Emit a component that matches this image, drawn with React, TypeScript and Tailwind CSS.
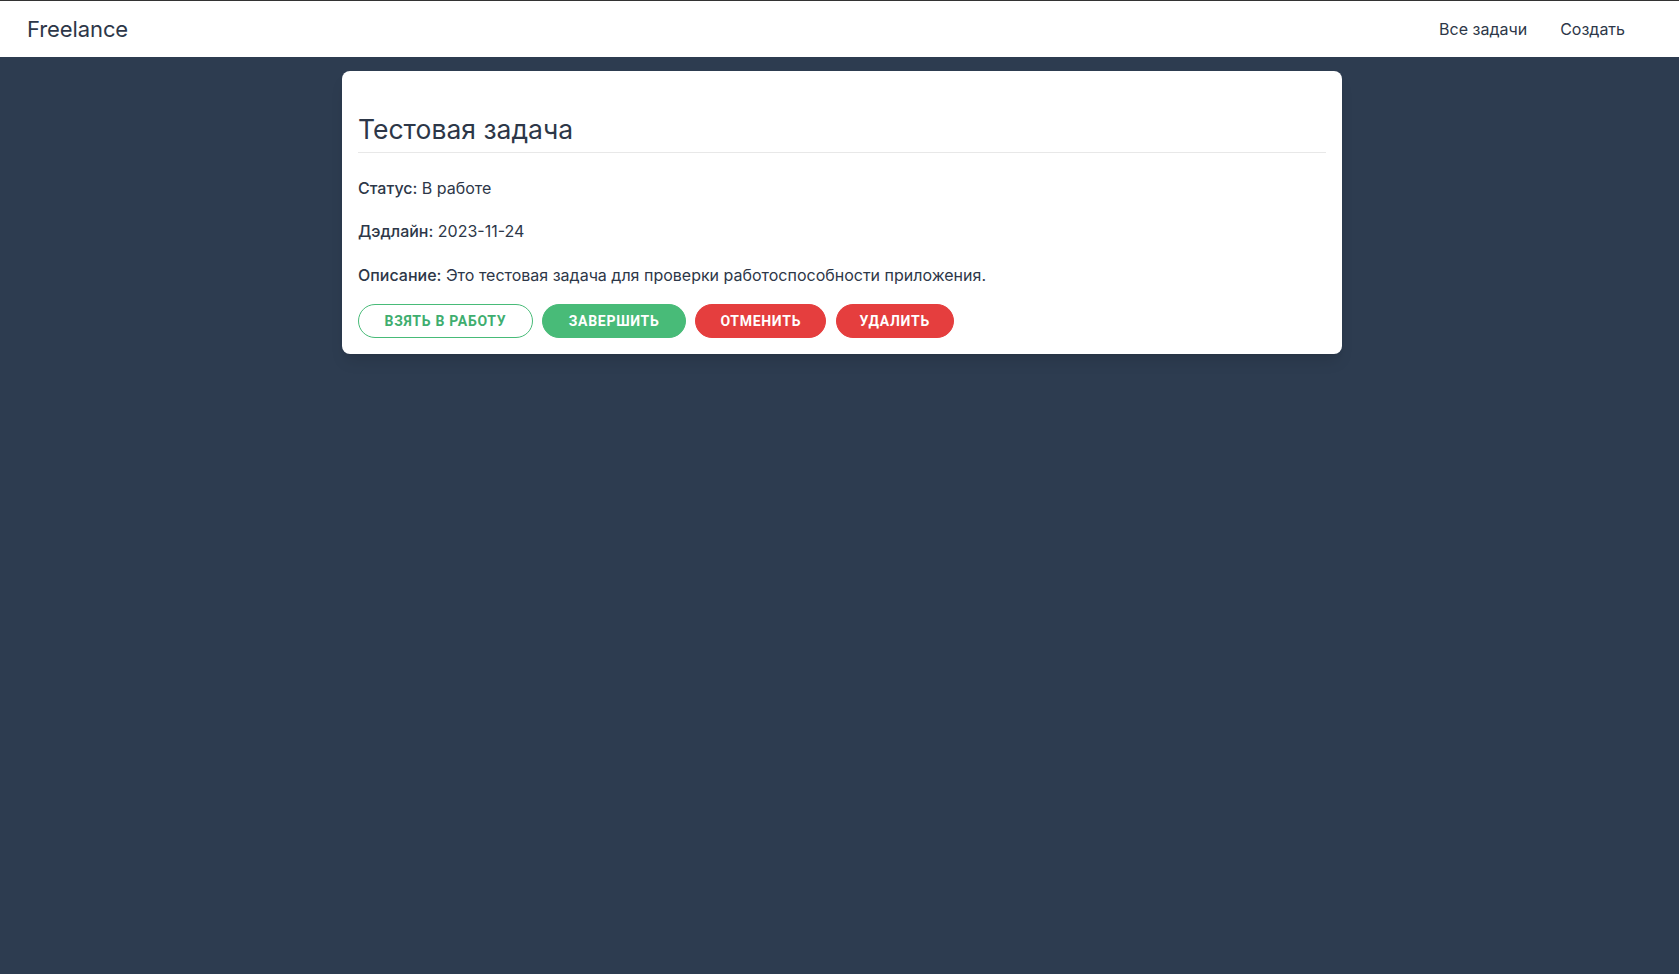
import React from "react";

export default function App() {
  return (
    <div className="min-h-[974px] bg-[#2d3c50] text-[#2d3748]" style={{ fontFamily: "Inter, 'Noto Sans', sans-serif" }}>
      <header className="h-[57px] border-t border-[#333333] bg-white flex items-center justify-between pl-[27px] pr-[54px]">
        <div className="text-[22px] leading-none tracking-[-0.1px]">Freelance</div>
        <nav className="flex items-center gap-[33px] text-[16px] -mt-[1px]">
          <a className="cursor-pointer">Все задачи</a>
          <a className="cursor-pointer">Создать</a>
        </nav>
      </header>
      <main className="flex justify-center pl-[5px] pt-[14px]">
        <div className="w-[1000px] bg-white rounded-[8px] shadow-lg px-4 pt-[43px] pb-[16.5px]">
          <h2 className="text-[26.5px] leading-[1.2] pb-[6px] border-b border-[#e8e8e8]">Тестовая задача</h2>
          <div className="flex flex-col gap-[19.5px] pt-[23px] text-[16px] leading-6">
            <p><span className="font-medium">Статус:</span> В работе</p>
            <p><span className="font-medium">Дэдлайн:</span> 2023-11-24</p>
            <p><span className="font-medium">Описание:</span> Это тестовая задача для проверки работоспособности приложения.</p>
          </div>
          <div className="flex gap-[9.5px] pt-[17.5px]" style={{ fontFamily: "Roboto, 'Liberation Sans', sans-serif" }}>
            <button className="h-[33.5px] px-[25.5px] rounded-full border border-[#48bb78] text-[#3fae6f] text-[14px] font-bold tracking-[0.05em] uppercase bg-white">Взять в работу</button>
            <button className="h-[33.5px] px-[25.5px] rounded-full border border-[#48bb78] bg-[#48bb78] text-white text-[14px] font-bold tracking-[0.05em] uppercase">Завершить</button>
            <button className="h-[33.5px] px-[24px] rounded-full border border-[#e53e3e] bg-[#e53e3e] text-white text-[14px] font-bold tracking-[0.05em] uppercase">Отменить</button>
            <button className="h-[33.5px] px-[23px] rounded-full border border-[#e53e3e] bg-[#e53e3e] text-white text-[14px] font-bold tracking-[0.05em] uppercase">Удалить</button>
          </div>
        </div>
      </main>
    </div>
  );
}
